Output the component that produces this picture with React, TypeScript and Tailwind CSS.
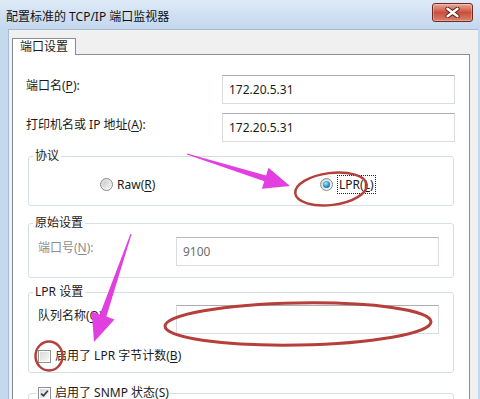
const font = "font-['Noto_Sans','Noto_Sans_CJK_SC',sans-serif]";

const Key = ({ k }: { k: string }) => <span className="underline underline-offset-[2px]">{k}</span>;

function Radio({ checked }: { checked?: boolean }) {
  return (
    <span className="w-[13px] h-[13px] shrink-0 rounded-full border border-[#8a8a8a] bg-linear-to-br from-[#d4d4d4] to-[#fbfbfb] flex items-center justify-center">
      {checked ? (
        <span className="w-[7px] h-[7px] rounded-full bg-[radial-gradient(circle_at_40%_35%,#a6ecff,#2b98c9_50%,#16496e)]" />
      ) : (
        <span className="w-[7px] h-[7px] rounded-full bg-linear-to-br from-[#c9c9c9] to-[#f3f3f3]" />
      )}
    </span>
  );
}

function Check({ checked }: { checked?: boolean }) {
  return (
    <span className="w-[13px] h-[13px] shrink-0 border border-[#8e8f8f] bg-white flex items-center justify-center">
      <span className="w-[9px] h-[9px] bg-linear-to-br from-[#d8d8d8] to-[#f8f8f8] flex items-center justify-center">
        {checked && (
          <svg width="9" height="9" viewBox="0 0 9 9">
            <path d="M1.2 4.6 L3.5 6.8 L7.8 1.8" stroke="#2a3b4e" strokeWidth="1.7" fill="none" />
          </svg>
        )}
      </span>
    </span>
  );
}

function TextBox({ w, value, disabled }: { w: string; value?: string; disabled?: boolean }) {
  return (
    <div
      className={`${w} h-[29px] shrink-0 flex items-center pl-[6px] bg-white border border-[#d8dce3] border-t-[#abadb3] ${
        disabled ? 'text-[#6d6d6d] border-[#d5d5d5] border-t-[#b8b8b8]' : 'text-[#1b1b1b]'
      }`}
    >
      {value}
    </div>
  );
}

function CloseButton() {
  return (
    <div className="mt-[3px] mr-[7px] w-[41px] h-[19px] rounded-[3px] border border-[#6e2a22] bg-linear-to-b from-[#eaa898] via-[#c8503c] to-[#d9806a] flex items-center justify-center shadow-[inset_0_0_0_1px_rgba(255,255,255,0.3)]">
      <svg width="15" height="11" viewBox="0 0 15 11">
        <path d="M2.5 1.8 L12.5 9.2 M12.5 1.8 L2.5 9.2" stroke="#5a1c14" strokeWidth="4.2" strokeLinecap="round" />
        <path d="M2.5 1.8 L12.5 9.2 M12.5 1.8 L2.5 9.2" stroke="#ffffff" strokeWidth="2.5" strokeLinecap="round" />
      </svg>
    </div>
  );
}

function Marks() {
  const pink = '#e23fe0';
  const red = '#b53f3a';
  return (
    <svg className="absolute inset-0 pointer-events-none" width="480" height="399" viewBox="0 0 480 399">
      <polygon
        points="186.85,154.48 264.3,181.2 261.9,188.8 290,186 268.5,167.8 266.1,175.4 187.15,153.52"
        fill={pink}
      />
      <polygon
        points="130.5,233.8 99.8,314.4 91.7,311.6 94,342 114.4,319.4 106.4,316.6 131.5,234.2"
        fill={pink}
      />
      <ellipse cx="331" cy="189" rx="36" ry="16" transform="rotate(-7 331 189)" fill="none" stroke={red} strokeWidth="2.5" />
      <ellipse cx="298" cy="324" rx="133" ry="21" transform="rotate(-1 298 324)" fill="none" stroke={red} strokeWidth="3" />
      <ellipse cx="49" cy="356" rx="13.5" ry="14.5" fill="none" stroke={red} strokeWidth="2.5" />
    </svg>
  );
}

export default function App() {
  return (
    <div className={`relative w-[480px] h-[399px] overflow-hidden flex flex-col bg-[#c4d8ee] text-[12px] leading-[16px] text-[#1b1b1b] ${font}`}>
      {/* title bar */}
      <div className="h-[29px] shrink-0 flex items-start justify-between bg-linear-to-b from-[#dfeaf7] to-[#c2d7ee]">
        <span className="ml-[6px] mt-[9px] text-[#111]">配置标准的 TCP/IP 端口监视器</span>
        <CloseButton />
      </div>

      <div className="flex flex-1 min-h-0">
        <div className="w-[8px] shrink-0 bg-[#c4d8ee]" />
        <div className="flex-1 flex flex-col overflow-hidden bg-[#f0f0f0] border-l border-t border-[#a9bcd2] pl-[3px] pt-[8px]">
          <div className="w-[64px] h-[21px] -mb-px relative z-10 bg-white border border-b-0 border-[#898c95] flex items-center justify-center">
            端口设置
          </div>
          <div className="w-[458px] h-[360px] shrink-0 bg-white border border-[#898c95] flex flex-col">
            <div className="mt-[20px] flex items-start">
              <span className="ml-[13px] w-[196px] mt-[3px]">
                端口名(<Key k="P" />):
              </span>
              <TextBox w="w-[233px]" value="172.20.5.31" />
            </div>
            <div className="mt-[9px] flex items-start">
              <span className="ml-[13px] w-[196px] mt-[4px]">
                打印机名或 IP 地址(<Key k="A" />):
              </span>
              <TextBox w="w-[233px]" value="172.20.5.31" />
            </div>

            <fieldset className="mt-[6px] ml-[15px] w-[426px] border border-[#d5dfe5] rounded-[3px]">
              <legend className="ml-[4px] px-[2px]">协议</legend>
              <div className="h-[41px] flex items-center">
                <div className="ml-[71px] w-[220px] flex items-center gap-[4px]">
                  <Radio />
                  <span>
                    Raw(<Key k="R" />)
                  </span>
                </div>
                <div className="flex items-center gap-[4px]">
                  <Radio checked />
                  <span className="border border-dotted border-[#222] px-[1px] leading-[17px]">
                    LPR(<Key k="L" />)
                  </span>
                </div>
              </div>
            </fieldset>

            <fieldset className="mt-[9px] ml-[15px] w-[426px] border border-[#d5dfe5] rounded-[3px]">
              <legend className="ml-[4px] px-[2px]">原始设置</legend>
              <div className="pt-[6px] pb-[11px] flex items-start">
                <span className="ml-[9px] w-[138px] mt-[3px] text-[#8d8d8d]">
                  端口号(<Key k="N" />):
                </span>
                <TextBox w="w-[263px]" value="9100" disabled />
              </div>
            </fieldset>

            <fieldset className="mt-[6px] ml-[15px] w-[426px] border border-[#d5dfe5] rounded-[3px]">
              <legend className="ml-[4px] px-[2px]">LPR 设置</legend>
              <div className="pt-[5px] flex items-start">
                <span className="ml-[9px] w-[138px] mt-[3px]">
                  队列名称(<Key k="Q" />):
                </span>
                <TextBox w="w-[263px]" />
              </div>
              <div className="mt-[14px] mb-[8px] ml-[9px] h-[16px] flex items-center gap-[4px]">
                <Check />
                <span>
                  启用了 LPR 字节计数(<Key k="B" />)
                </span>
              </div>
            </fieldset>

            <fieldset className="mt-[12px] ml-[15px] w-[426px] h-[60px] border border-[#d5dfe5] rounded-[3px]">
              <legend className="ml-[8px] px-[1px]">
                <div className="flex items-center gap-[4px]">
                  <Check checked />
                  <span>
                    启用了 SNMP 状态(<Key k="S" />)
                  </span>
                </div>
              </legend>
            </fieldset>
          </div>
        </div>
        <div className="w-[2px] shrink-0 bg-[#c4d8ee]" />
      </div>

      <Marks />
    </div>
  );
}
